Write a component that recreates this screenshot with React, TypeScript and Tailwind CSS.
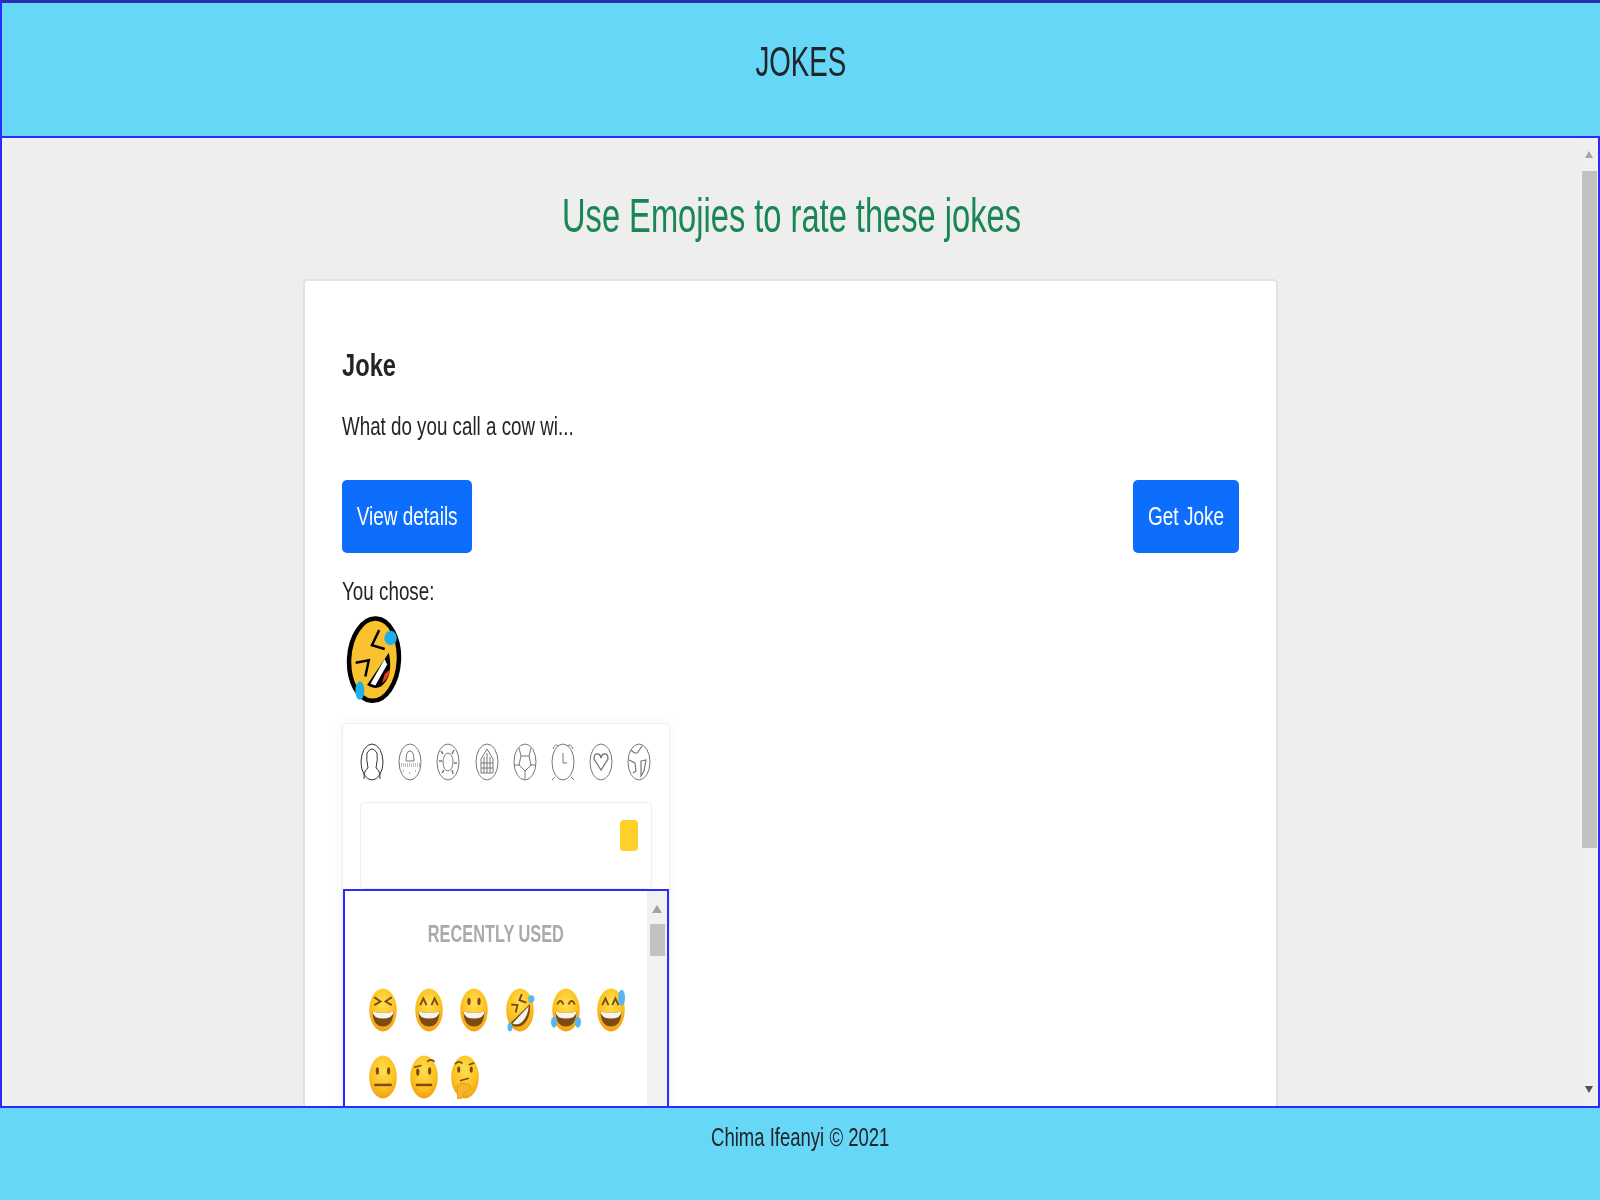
import type { ReactNode } from 'react';

function Face({ children, tilt = 0 }: { children: ReactNode; tilt?: number }) {
  return (
    <svg viewBox="0 0 48 72" preserveAspectRatio="none" className="w-[30px] h-[44px] shrink-0 blur-[0.7px]">
      <defs>
        <radialGradient id="faceFill" cx="50%" cy="35%" r="70%">
          <stop offset="0%" stopColor="#ffdf55" />
          <stop offset="60%" stopColor="#fcc21f" />
          <stop offset="100%" stopColor="#ef9a12" />
        </radialGradient>
      </defs>
      <ellipse cx="24" cy="36" rx="22" ry="35" fill="url(#faceFill)" />
      <g transform={`rotate(${tilt} 24 36)`}>{children}</g>
    </svg>
  );
}

function Grin() {
  return (
    <>
      <path d="M7 38 Q24 44 41 38 Q40 63 24 63 Q8 63 7 38Z" fill="#7d4a12" />
      <path d="M7 38 Q24 44 41 38 Q40 50 24 50 Q8 50 7 38Z" fill="#f4f4f0" />
    </>
  );
}

const ink = '#7a4a10';

function RecentEmojis() {
  return (
    <div className="flex flex-col gap-[23px]">
      <div className="flex gap-[15.7px]">
        <Face>
          <path d="M10 15 L20 22 L10 28 M38 15 L28 22 L38 28" fill="none" stroke={ink} strokeWidth="3" />
          <Grin />
        </Face>
        <Face>
          <path d="M10 28 L15 17 L20 28 M28 28 L33 17 L38 28" fill="none" stroke={ink} strokeWidth="3" />
          <Grin />
        </Face>
        <Face>
          <ellipse cx="16" cy="22" rx="2.6" ry="6" fill={ink} />
          <ellipse cx="32" cy="22" rx="2.6" ry="6" fill={ink} />
          <Grin />
        </Face>
        <Face>
          <path d="M27 10 L23 20 L34 24 M10 27 L20 28 L17 40" fill="none" stroke={ink} strokeWidth="3" />
          <path d="M40 26 Q42 52 26 62 Q14 66 8 58Z" fill="#7d4a12" />
          <path d="M38 30 Q36 50 24 58 Q16 61 12 58Z" fill="#f4f4f0" />
          <ellipse cx="42" cy="18" rx="5" ry="6" fill="#58b7f0" />
          <ellipse cx="8" cy="64" rx="4" ry="7" fill="#58b7f0" />
        </Face>
        <Face>
          <path d="M10 27 Q15 15 20 27 M28 27 Q33 15 38 27" fill="none" stroke={ink} strokeWidth="3" />
          <Grin />
          <ellipse cx="5" cy="56" rx="5" ry="9" fill="#58b7f0" />
          <ellipse cx="43" cy="56" rx="5" ry="9" fill="#58b7f0" />
        </Face>
        <Face>
          <path d="M10 28 L15 17 L20 28 M26 28 L31 17 L36 28" fill="none" stroke={ink} strokeWidth="3" />
          <Grin />
          <ellipse cx="41" cy="16" rx="5.5" ry="13" fill="#58b7f0" />
        </Face>
      </div>
      <div className="flex gap-[11px]">
        <Face>
          <ellipse cx="15" cy="26" rx="2.6" ry="6" fill={ink} />
          <ellipse cx="33" cy="26" rx="2.6" ry="6" fill={ink} />
          <rect x="10" y="47" width="28" height="4" fill={ink} />
        </Face>
        <Face>
          <path d="M8 20 L20 17 M29 11 Q35 5 41 11" fill="none" stroke={ink} strokeWidth="2.5" />
          <ellipse cx="14" cy="28" rx="2.6" ry="6" fill={ink} />
          <ellipse cx="33" cy="26" rx="2.6" ry="6" fill={ink} />
          <rect x="11" y="47" width="26" height="4" fill={ink} />
        </Face>
        <Face>
          <path d="M8 15 Q14 8 20 14 M30 16 L39 13" fill="none" stroke={ink} strokeWidth="2.5" />
          <ellipse cx="14" cy="24" rx="2.4" ry="5" fill={ink} />
          <ellipse cx="34" cy="24" rx="2.4" ry="5" fill={ink} />
          <path d="M16 42 L30 38" stroke={ink} strokeWidth="2.5" />
          <path d="M12 72 L12 50 Q22 42 32 50 Q36 58 22 62 L20 70Z" fill="#f6b52a" stroke="#e39a16" strokeWidth="1.5" />
        </Face>
      </div>
    </div>
  );
}

function ChosenEmoji() {
  return (
    <svg viewBox="24 18 162 262" preserveAspectRatio="none" className="w-[56px] h-[90px] ml-[4px] blur-[0.5px]">
      <ellipse cx="105" cy="148" rx="72" ry="120" fill="#f9c22e" stroke="#000" strokeWidth="13" transform="rotate(3 105 148)" />
      <path d="M120 62 L99 106 L136 117" fill="none" stroke="#000" strokeWidth="7" />
      <path d="M52 157 L90 150 L80 197" fill="none" stroke="#000" strokeWidth="7" />
      <path d="M148 128 Q162 200 125 226 Q105 236 85 222Z" fill="#000" />
      <path d="M136 146 L95 218 L109 223 L143 162Z" fill="#fff" />
      <path d="M152 176 Q146 206 128 216 L136 190Z" fill="#e8401c" />
      <ellipse cx="153" cy="85" rx="18" ry="21" fill="#1fb0ec" />
      <ellipse cx="64" cy="238" rx="13" ry="27" fill="#1fb0ec" />
    </svg>
  );
}

function TabIcon({ children, dark = false }: { children?: ReactNode; dark?: boolean }) {
  return (
    <svg viewBox="0 0 24 38" preserveAspectRatio="none" className="w-[24px] h-[38px] blur-[0.3px]" fill="none" stroke={dark ? '#333' : '#777'} strokeWidth="1">
      <ellipse cx="12" cy="19" rx="11" ry="18" />
      {children}
    </svg>
  );
}

function PickerTabs() {
  return (
    <div className="flex ml-[17px] gap-[14.2px]">
      <TabIcon dark>
        <path d="M4 36 Q4 27 8 25 Q6 16 7 10 Q12 2 17 10 Q18 16 16 25 Q20 27 20 36" />
      </TabIcon>
      <TabIcon>
        <path d="M1 21 H23 M1 23 H23" strokeDasharray="1 1" />
        <path d="M8 18 Q8 8 12 8 Q16 8 16 18Z M5 28 h1 M11 30 h1 M17 28 h1" />
      </TabIcon>
      <TabIcon>
        <ellipse cx="12" cy="19" rx="5" ry="9" />
        <path d="M5 8 l2 3 M18 7 l-2 4 M3 18 l3 0 M21 20 l-3 0 M6 30 l2 -3 M17 31 l-1 -4" strokeWidth="1.4" />
      </TabIcon>
      <TabIcon>
        <path d="M6 30 V16 L12 6 L18 16 V30Z M9 30 V14 M12 30 V10 M15 30 V14 M6 20 H18 M6 25 H18" />
      </TabIcon>
      <TabIcon>
        <path d="M8 13 L16 13 L18 22 L12 28 L6 22Z M8 13 L6 5 M16 13 L18 5 M6 22 L1 22 M18 22 L23 22 M12 28 V36" />
      </TabIcon>
      <TabIcon>
        <path d="M12 10 V20 L16 20 M2 6 Q4 0 8 3 M22 6 Q20 0 16 3 M4 34 L1 37 M20 34 L23 37" />
      </TabIcon>
      <TabIcon>
        <path d="M12 27 L5 16 Q5 10 9 11 Q11 11 12 15 Q13 11 15 11 Q19 10 19 16Z" strokeWidth="1.3" />
      </TabIcon>
      <TabIcon>
        <path d="M4 7 Q9 12 11 9 L15 3 M14 18 L19 17 L17 28 L14 33 Z M2 17 L8 20 L9 28 L6 30" strokeWidth="1.2" />
      </TabIcon>
    </div>
  );
}

export default function App() {
  return (
    <div className="h-[1200px] w-full flex flex-col overflow-hidden bg-[#67d7f7] text-[#212529] font-['Liberation_Sans',Arial,sans-serif]">
      {/* Header */}
      <header className="h-[136px] shrink-0 border-t-[3px] border-t-[#2d2db0] border-l-2 border-l-[#2b2bff] flex items-start justify-center">
        <h1 className="mt-[32px] h-[54px] text-[42px] leading-[54px] inline-block scale-x-[0.66]">JOKES</h1>
      </header>

      {/* Main area */}
      <div className="h-[972px] shrink-0 border-2 border-[#2b2bff] bg-[#eeeeee] flex overflow-hidden">
        <main className="flex-1 pt-[48px] overflow-hidden">
          <h2 className="h-[60px] text-center">
            <span className="inline-block text-[#198754] text-[48px] leading-[60px] scale-x-[0.68]">Use Emojies to rate these jokes</span>
          </h2>

          <section className="w-[975px] ml-[301px] mt-[33px] h-[900px] bg-white border-2 border-[#e2e2e2] rounded-[5px] px-[37px] pt-[60px]">
            <h3 className="h-[48px] text-[32px] leading-[48px] font-bold origin-left scale-x-[0.74]">Joke</h3>
            <p className="mt-[17px] h-[40px] text-[26px] leading-[40px] origin-left scale-x-[0.722]">What do you call a cow wi...</p>

            <div className="mt-[34px] flex justify-between">
              <button className="w-[130px] h-[73px] bg-[#0d6efd] text-white rounded-[5px] text-[26px] flex items-center justify-center">
                <span className="inline-block shrink-0 whitespace-nowrap scale-x-[0.73]">View details</span>
              </button>
              <button className="w-[106px] h-[73px] bg-[#0d6efd] text-white rounded-[5px] text-[26px] flex items-center justify-center">
                <span className="inline-block shrink-0 whitespace-nowrap scale-x-[0.73]">Get Joke</span>
              </button>
            </div>

            <p className="mt-[20px] h-[36px] text-[26px] leading-[36px] origin-left scale-x-[0.724]">You chose:</p>
            <div className="mt-[6px]">
              <ChosenEmoji />
            </div>

            {/* Emoji picker */}
            <div className="mt-[18px] w-[328px] h-[500px] border border-[#eeeeee] rounded-[5px] pt-[19px] shadow-[0_0_12px_#f2f2f2]">
              <PickerTabs />
              <div className="mt-[21px] ml-[17px] w-[292px] h-[87px] border border-[#eeeeee] rounded-[4px] flex justify-end pt-[17px] pr-[13px]">
                <div className="w-[18px] h-[31px] bg-[#ffd02a] rounded-[4px]" />
              </div>
              <div className="w-[326px] h-[300px] border-2 border-[#2b2bff] flex">
                <div className="flex-1 pt-[29px]">
                  <div className="h-[28px] text-center text-[23px] leading-[28px] font-bold text-[#aaaaaa]">
                    <span className="inline-block whitespace-nowrap scale-x-[0.71]">RECENTLY USED</span>
                  </div>
                  <div className="mt-[40px] ml-[23px]">
                    <RecentEmojis />
                  </div>
                </div>
                <div className="w-[20px] bg-[#f1f1f1] pt-[14px] flex flex-col items-center">
                  <div className="w-0 h-0 border-x-[5px] border-x-transparent border-b-[8px] border-b-[#a3a3a3]" />
                  <div className="mt-[11px] w-[15px] h-[32px] bg-[#c1c1c1]" />
                </div>
              </div>
            </div>
          </section>
        </main>

        {/* Page scrollbar */}
        <div className="w-[18px] shrink-0 bg-[#efefef] flex flex-col items-center pt-[13px] pb-[13px]">
          <div className="w-0 h-0 border-x-[4px] border-x-transparent border-b-[7px] border-b-[#a3a3a3]" />
          <div className="mt-[13px] w-[15px] h-[677px] bg-[#c1c1c1]" />
          <div className="mt-auto w-0 h-0 border-x-[4px] border-x-transparent border-t-[7px] border-t-[#505050]" />
        </div>
      </div>

      {/* Footer */}
      <footer className="flex-1 flex justify-center">
        <p className="mt-[11px] h-[36px] text-[26px] leading-[36px] whitespace-nowrap scale-x-[0.712]">Chima Ifeanyi © 2021</p>
      </footer>
    </div>
  );
}
